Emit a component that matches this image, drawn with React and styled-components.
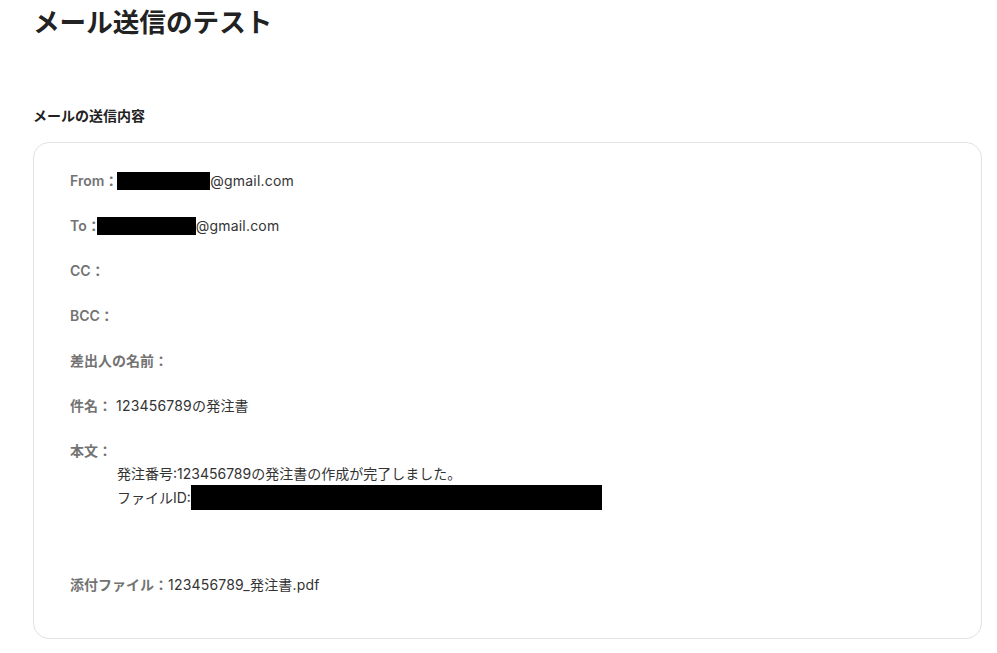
import styled, { createGlobalStyle } from 'styled-components';

const GlobalStyle = createGlobalStyle`
  body {
    margin: 0;
    background: #ffffff;
    font-family: "Inter", "Noto Sans CJK JP", sans-serif;
    color: #333333;
  }
`;

const Page = styled.div`
  padding: 0 15px 0 33px;
`;

const Title = styled.h1`
  margin: 0;
  font-size: 26.6px;
  line-height: 44px;
  font-weight: 700;
  color: #222222;
`;

const SectionLabel = styled.h2`
  margin: 62px 0 16px;
  font-size: 14px;
  line-height: 20px;
  font-weight: 700;
  color: #222222;
`;

const Card = styled.div`
  border: 1px solid #e2e2e2;
  border-radius: 16px;
  padding: 27px 36px 42px;
  display: flex;
  flex-direction: column;
  gap: 23px;
`;

const Row = styled.div`
  display: flex;
  align-items: center;
  font-size: 14px;
  line-height: 22px;
  margin-top: ${(p) => p.$offset || 0}px;
`;

const Label = styled.span`
  color: #737373;
  font-weight: 600;
  margin-right: ${(p) => p.$gap || 0}px;
`;

const Value = styled.span`
  color: #333333;
  letter-spacing: 0.2px;
`;

const Redacted = styled.span`
  display: inline-block;
  background: #000000;
  width: ${(p) => p.$w}px;
  height: ${(p) => p.$h || 18}px;
  margin-left: ${(p) => p.$ml || 0}px;
`;

const BodyBlock = styled.div`
  display: flex;
  flex-direction: column;
`;

const BodyText = styled.div`
  padding-left: 47px;
  font-size: 14px;
  line-height: 23px;
  color: #333333;
  display: flex;
  align-items: center;
`;

function App() {
  return (
    <Page>
      <GlobalStyle />
      <Title>メール送信のテスト</Title>
      <SectionLabel>メールの送信内容</SectionLabel>
      <Card>
        <Row>
          <Label>From：</Label>
          <Redacted $w={93} $ml={-1} />
          <Value>@gmail.com</Value>
        </Row>
        <Row>
          <Label>To：</Label>
          <Redacted $w={99} $ml={-4} />
          <Value>@gmail.com</Value>
        </Row>
        <Row>
          <Label>CC：</Label>
        </Row>
        <Row>
          <Label>BCC：</Label>
        </Row>
        <Row>
          <Label>差出人の名前：</Label>
        </Row>
        <Row>
          <Label $gap={4}>件名：</Label>
          <Value>123456789の発注書</Value>
        </Row>
        <BodyBlock>
          <Row>
            <Label>本文：</Label>
          </Row>
          <BodyText>発注番号:123456789の発注書の作成が完了しました。</BodyText>
          <BodyText>
            ファイルID:
            <Redacted $w={411} $h={25} />
          </BodyText>
        </BodyBlock>
        <Row $offset={41}>
          <Label>添付ファイル：</Label>
          <Value>123456789_発注書.pdf</Value>
        </Row>
      </Card>
    </Page>
  );
}

export default App;
